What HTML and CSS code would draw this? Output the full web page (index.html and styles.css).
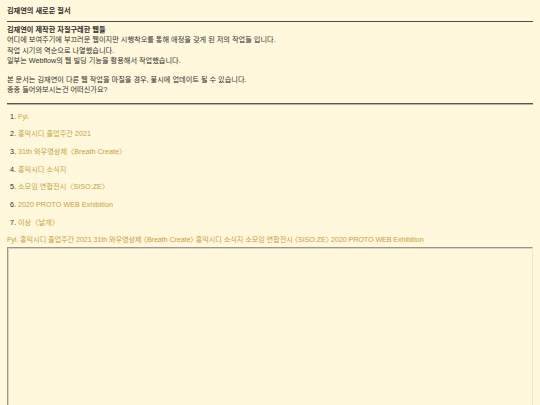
FILE: index.html
```html
<!DOCTYPE html>
<html lang="ko">
<head>
<meta charset="utf-8">
<title>김재연의 새로운 질서</title>
<link rel="stylesheet" href="styles.css">
</head>
<body>
<h1 class="title">김재연의 새로운 질서</h1>
<hr class="rule rule-top">
<div class="intro">
<p class="para"><b>김재연이 제작한 자질구레한 웹들</b><br>어디에 보여주기에 부끄러운 웹이지만 시행착오를 통해 애정을 갖게 된 저의 작업들 입니다.<br>작업 시기의 역순으로 나열했습니다.<br>일부는 Webflow의 웹 빌딩 기능을 활용해서 작업했습니다.</p>
<p class="para">본 문서는 김재연이 다른 웹 작업을 마칠을 경우, 불시에 업데이트 될 수 있습니다.<br>종종 들어와보시는건 어떠신가요?</p>
</div>
<hr class="rule rule-bottom">
<ol class="works">
<li><a href="#">Fyi.</a></li>
<li><a href="#">홍익시디 졸업주간 2021</a></li>
<li><a href="#">31th 와우영상제〈Breath Create〉</a></li>
<li><a href="#">홍익시디 소식지</a></li>
<li><a href="#">소모임 연합전시〈SISO:ZE〉</a></li>
<li><a href="#">2020 PROTO WEB Exhibition</a></li>
<li><a href="#">이상〈날개〉</a></li>
</ol>
<div class="links"><a href="#">Fyi.</a> <a href="#">홍익시디 졸업주간 2021</a> <a href="#">31th 와우영상제 〈Breath Create〉</a> <a href="#">홍익시디 소식지</a> <a href="#">소모임 연합전시 〈SISO:ZE〉</a> <a href="#">2020 PROTO WEB Exhibition</a></div>
<div class="frame"></div>
</body>
</html>
```

FILE: styles.css
```css
html, body {
  margin: 0;
  padding: 0;
  background: #fff8dc;
  overflow: hidden;
}
body {
  box-sizing: border-box;
  display: flex;
  flex-direction: column;
  padding: 0 7px;
  font-family: "Liberation Sans", "Noto Sans CJK KR", sans-serif;
  font-size: 7.2px;
  line-height: 10.5px;
  color: #2e2e2e;
  height: 405px;
}
.title {
  font-size: 7.2px;
  font-weight: bold;
  margin: 0;
  padding-top: 6px;
  line-height: 10.5px;
  height: 10.5px;
}
.rule {
  margin: 0;
  border: 0;
  height: 0;
  flex: none;
}
.rule-top {
  margin-top: 4px;
  border-top: 1px solid #4a4a4a;
}
.intro {
  padding-top: 3px;
}
.para {
  margin: 0 0 8px 0;
}
.para:last-child {
  margin-bottom: 0;
}
.rule-bottom {
  margin-top: 7px;
  border-top: 1px solid #555;
  border-bottom: 1px solid #b8b2a0;
}
.works {
  margin: 0;
  padding: 7px 0 0 3px;
  list-style-position: inside;
}
.works li {
  height: 10.5px;
  margin-bottom: 7.2px;
}
a {
  color: #c9a13b;
  text-decoration: none;
}
.links {
  margin-top: 0;
  height: 10.5px;
  white-space: nowrap;
  font-feature-settings: "halt";
  letter-spacing: -0.1px;
}
.frame {
  flex: 1;
  margin-top: 1px;
  border-top: 1px solid #9a968c;
  border-left: 1px solid #9a968c;
  border-right: 1px solid #ece6d4;
  box-shadow: inset 1px 1px 0 #d8d2c0;
}
```
